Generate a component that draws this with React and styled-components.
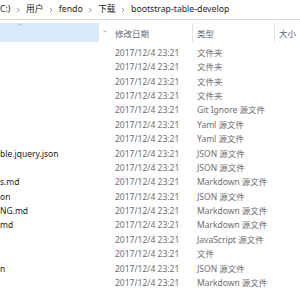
import React from "react";
import styled, { createGlobalStyle } from "styled-components";

const Global = createGlobalStyle`
  html, body { margin: 0; padding: 0; background: #fff; overflow: hidden; }
  body { font-family: "Noto Sans", "Noto Sans CJK SC", sans-serif; }
`;

const Window = styled.div`
  width: 300px;
  height: 300px;
  overflow: hidden;
  background: #fff;
  display: flex;
  flex-direction: column;
`;

const AddressBar = styled.div`
  height: 19px;
  border-bottom: 1px solid #dadada;
  display: flex;
  align-items: center;
  white-space: nowrap;
  font-size: 8.7px;
  color: #1e1e1e;
  flex: none;
`;

const Crumb = styled.span`
  line-height: 1;
`;

const SepIcon = styled.svg`
  width: 4px;
  height: 6px;
  margin: 0 6px 0 5.5px;
  flex: none;
`;

const Sep = () => (
  <SepIcon viewBox="0 0 4 6">
    <path d="M0.8 0.8 L3.2 3 L0.8 5.2" fill="none" stroke="#8a8a8a" strokeWidth="0.9" />
  </SepIcon>
);

const cols = "99px 12px 82px 82px 1fr";

const Header = styled.div`
  margin-top: 3px;
  height: 19px;
  display: grid;
  grid-template-columns: ${cols};
  font-size: 8.5px;
  color: #5d6673;
  flex: none;
`;

const HeadCell = styled.div`
  display: flex;
  align-items: center;
  padding-left: ${(p) => p.$pad || 0}px;
  background: ${(p) => (p.$active ? "#d9ebf9" : "transparent")};
  border-right: ${(p) => (p.$sep ? "1px solid #e3e3e3" : "none")};
  position: relative;
  white-space: nowrap;
  overflow: hidden;
`;

const SortArrow = styled.svg`
  position: absolute;
  left: 18px;
  top: 0px;
  width: 5px;
  height: 3px;
`;

const DropIcon = styled.svg`
  width: 4px;
  height: 3px;
  margin-left: 2px;
  margin-top: -3px;
`;

const List = styled.div`
  padding-top: 3.8px;
  display: flex;
  flex-direction: column;
`;

const Row = styled.div`
  height: 14.375px;
  display: grid;
  grid-template-columns: 111px 82px 82px 1fr;
  align-items: center;
  font-size: 8.5px;
  white-space: nowrap;
`;

const Cell = styled.div`
  padding-left: ${(p) => p.$pad}px;
  color: ${(p) => (p.$dim ? "#6d6d6d" : "#1a1a1a")};
  overflow: hidden;
  line-height: 14px;
`;

const rows = [
  ["", "文件夹"],
  ["", "文件夹"],
  ["", "文件夹"],
  ["", "文件夹"],
  ["", "Git Ignore 源文件"],
  ["", "Yaml 源文件"],
  ["", "Yaml 源文件"],
  ["ble.jquery.json", "JSON 源文件"],
  ["", "JSON 源文件"],
  ["s.md", "Markdown 源文件"],
  ["on", "JSON 源文件"],
  ["NG.md", "Markdown 源文件"],
  ["md", "Markdown 源文件"],
  ["", "JavaScript 源文件"],
  ["", "文件"],
  ["n", "JSON 源文件"],
  ["", "Markdown 源文件"],
];

export default function App() {
  return (
    <Window>
      <Global />
      <AddressBar>
        <Crumb>C:)</Crumb>
        <Sep />
        <Crumb>用户</Crumb>
        <Sep />
        <Crumb>fendo</Crumb>
        <Sep />
        <Crumb>下载</Crumb>
        <Sep />
        <Crumb>bootstrap-table-develop</Crumb>
      </AddressBar>
      <Header>
        <HeadCell $active $sep>
          <SortArrow viewBox="0 0 5 3">
            <path d="M0.5 2.6 L2.5 0.6 L4.5 2.6" fill="none" stroke="#98a4b3" strokeWidth="0.8" />
          </SortArrow>
        </HeadCell>
        <HeadCell $pad={2}>
          <DropIcon viewBox="0 0 4 3">
            <path d="M0.4 0.6 L2 2.2 L3.6 0.6" fill="none" stroke="#7a8594" strokeWidth="0.8" />
          </DropIcon>
        </HeadCell>
        <HeadCell $pad={4} $sep>修改日期</HeadCell>
        <HeadCell $pad={4} $sep>类型</HeadCell>
        <HeadCell $pad={4}>大小</HeadCell>
      </Header>
      <List>
        {rows.map(([name, type], i) => (
          <Row key={i}>
            <Cell $pad={0}>{name}</Cell>
            <Cell $pad={4} $dim>2017/12/4 23:21</Cell>
            <Cell $pad={4} $dim>{type}</Cell>
            <Cell $pad={4} $dim></Cell>
          </Row>
        ))}
      </List>
    </Window>
  );
}
